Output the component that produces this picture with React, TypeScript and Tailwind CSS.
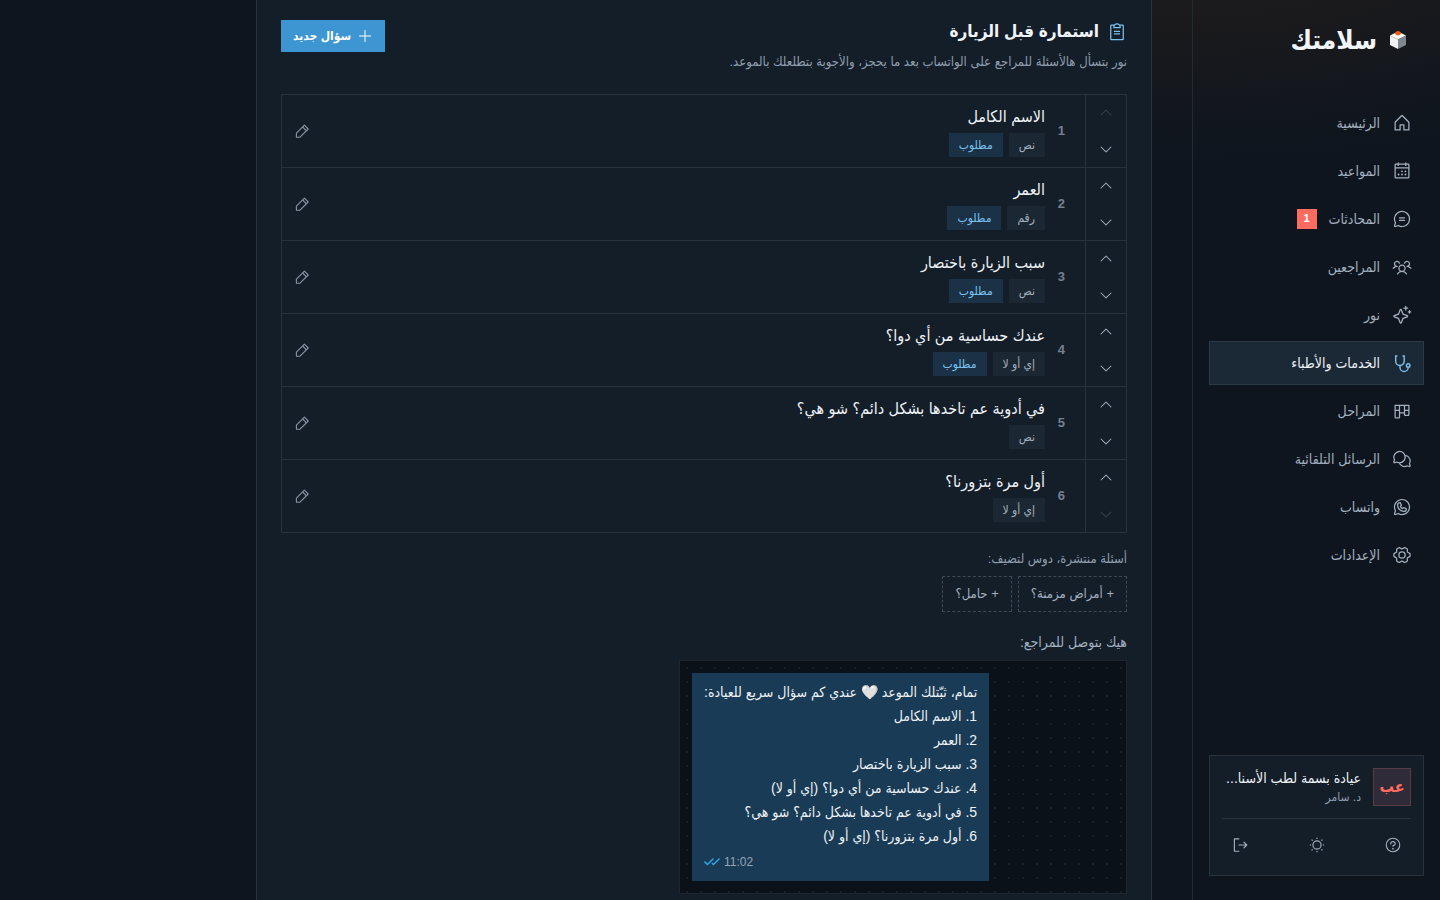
import type { ComponentType, ReactNode } from "react";
import {
  PiCalendarDots,
  PiCaretDown,
  PiCaretUp,
  PiChatCircleText,
  PiChatsCircle,
  PiChecksBold,
  PiClipboardText,
  PiGearSix,
  PiHouse,
  PiKanban,
  PiPlus,
  PiQuestion,
  PiSignOut,
  PiSparkle,
  PiUsersThree,
  PiWhatsappLogo,
} from "react-icons/pi";

type IconProps = { className?: string };

type NavItem = {
  label: string;
  icon: ComponentType<IconProps>;
  badge?: number;
  active?: boolean;
};

function StethoscopeIcon({ className }: IconProps) {
  return (
    <svg viewBox="0 0 20 20" className={className} fill="none" stroke="currentColor" strokeWidth="1.400" aria-hidden="true">
      <path d="M5.400 3H3.700v5.200a4.250 4.250 0 0 0 8.500 0V3h-1.700" />
      <path d="M8 12.400v2a4.100 4.100 0 0 0 8.200 0v-.2" />
      <circle cx="16.200" cy="12.500" r="1.800" />
    </svg>
  );
}

function SunIcon({ className }: IconProps) {
  return (
    <svg viewBox="0 0 18 18" className={className} fill="none" stroke="currentColor" strokeWidth="1.150" aria-hidden="true">
      <circle cx="9" cy="9" r="4.100" />
      <path d="M9 1.800v1.300M9 14.900v1.300M1.800 9h1.300M14.900 9h1.300M3.600 3.600l1 1M13.400 13.400l1 1M3.600 14.400l1-1M13.400 4.600l1-1" />
    </svg>
  );
}

function PencilIcon({ className }: IconProps) {
  return (
    <svg viewBox="0 0 16 16" className={className} fill="none" stroke="currentColor" strokeWidth="1.100" aria-hidden="true">
      <path d="M2.400 14.200v-4L10.400 2.200 14.200 6l-8.200 8.200z" strokeLinejoin="round" />
      <path d="M8.600 4l3.800 3.800" />
    </svg>
  );
}

const navItems: NavItem[] = [
  { label: "الرئيسية", icon: PiHouse },
  { label: "المواعيد", icon: PiCalendarDots },
  { label: "المحادثات", icon: PiChatCircleText, badge: 1 },
  { label: "المراجعين", icon: PiUsersThree },
  { label: "نور", icon: PiSparkle },
  { label: "الخدمات والأطباء", icon: StethoscopeIcon, active: true },
  { label: "المراحل", icon: PiKanban },
  { label: "الرسائل التلقائية", icon: PiChatsCircle },
  { label: "واتساب", icon: PiWhatsappLogo },
  { label: "الإعدادات", icon: PiGearSix },
];

type Question = { title: string; type: string; required?: boolean };

const questions: Question[] = [
  { title: "الاسم الكامل", type: "نص", required: true },
  { title: "العمر", type: "رقم", required: true },
  { title: "سبب الزيارة باختصار", type: "نص", required: true },
  { title: "عندك حساسية من أي دوا؟", type: "إي أو لا", required: true },
  { title: "في أدوية عم تاخدها بشكل دائم؟ شو هي؟", type: "نص" },
  { title: "أول مرة بتزورنا؟", type: "إي أو لا" },
];

const suggestions = ["أمراض مزمنة؟", "حامل؟"];

const yesNo = "إي أو لا";

function Logo() {
  return (
    <svg viewBox="0 0 18 20" className="h-5 w-[18px]" aria-hidden="true">
      <path d="M1 5.500 9 1.500l8 4-8 4z" fill="#fbfaf8" />
      <path d="M1 5.500l8 4V19l-8-4z" fill="#f4f2f0" />
      <path d="M17 5.500l-8 4V19l8-4z" fill="#7f868e" />
      <path d="M6 3.500 7.500 1.200h3L12 3.500l-1.500 1.800h-3z" fill="#f9560f" />
      <path d="M1 5.500l8 4" fill="none" stroke="#c9cbcd" strokeWidth=".6" />
    </svg>
  );
}

function NavLink({ label, icon: Icon, badge, active }: NavItem) {
  return (
    <a
      href="#"
      aria-current={active ? "page" : undefined}
      className={
        active
          ? "flex h-11 items-center gap-3 border border-[#2b3a47] bg-[#1b2835] px-[11px] text-sm text-[#eef2f6]"
          : "flex h-11 items-center gap-3 border border-transparent px-[11px] text-sm text-[#a3b0bf]"
      }
    >
      <Icon className={active ? "size-5 text-[#7cc0ee]" : "size-5"} />
      <span>{label}</span>
      {badge !== undefined && (
        <span className="flex size-5 items-center justify-center bg-[#ff6b5e] text-[11px] font-bold text-white">
          {badge}
        </span>
      )}
    </a>
  );
}

function ToolButton({ label, children }: { label: string; children: ReactNode }) {
  return (
    <button type="button" aria-label={label} className="flex size-9 items-center justify-center">
      {children}
    </button>
  );
}

function Sidebar() {
  return (
    <aside className="flex w-62 shrink-0 flex-col border-e border-[#222a34] px-4 pt-4 pb-6">
      <div className="flex h-12 items-center gap-3 px-[17px]">
        <Logo />
        <span className="text-[26px] leading-8 font-bold text-[#f1f4f8]">سلامتك</span>
      </div>
      <nav className="mt-[37px] flex flex-col gap-1">
        {navItems.map((item) => (
          <NavLink key={item.label} {...item} />
        ))}
      </nav>
      <div className="mt-auto border border-[#27323d] bg-[#141e29] p-3">
        <div className="flex items-center gap-3 pb-3">
          <div className="flex size-[38px] shrink-0 items-center justify-center border border-[#5a3a47] bg-[#302b38] font-bold text-[#ff6b5e]">
            عب
          </div>
          <div className="min-w-0 flex-1">
            <div className="text-sm leading-5 font-medium whitespace-nowrap text-[#eef2f6]">
              عيادة بسمة لطب الأسنا...
            </div>
            <div className="text-xs leading-[18px] text-[#8f9dac]">د. سامر</div>
          </div>
        </div>
        <div className="flex justify-between border-t border-[#27323d] pt-2 text-[#a3b0bf]">
          <ToolButton label="مساعدة">
            <PiQuestion className="size-[18px]" />
          </ToolButton>
          <ToolButton label="المظهر">
            <SunIcon className="size-[18px]" />
          </ToolButton>
          <ToolButton label="تسجيل الخروج">
            <PiSignOut className="size-[18px]" />
          </ToolButton>
        </div>
      </div>
    </aside>
  );
}

function QuestionRow({ question, index }: { question: Question; index: number }) {
  return (
    <li className="flex">
      <div className="flex w-[41px] flex-col border-e border-[#27323d] text-[#a3b0bf]">
        <button
          type="button"
          aria-label="لفوق"
          disabled={index === 0}
          className="flex flex-1 items-center justify-center disabled:opacity-25"
        >
          <PiCaretUp className="size-4" />
        </button>
        <button
          type="button"
          aria-label="لتحت"
          disabled={index === questions.length - 1}
          className="flex flex-1 items-center justify-center disabled:opacity-25"
        >
          <PiCaretDown className="size-4" />
        </button>
      </div>
      <div className="flex flex-1 items-center gap-3 py-2.5 ps-5 pe-1">
        <span className="w-2 text-[13px] font-bold text-[#738190]">{index + 1}</span>
        <div className="flex-1">
          <div className="text-base leading-6 font-medium text-[#eef2f6]">{question.title}</div>
          <div className="mt-1 flex gap-1.5 text-xs">
            <span className="flex h-6 items-center bg-[#1b2733] px-2.5 text-[#a3b0bf]">
              {question.type}
            </span>
            {question.required && (
              <span className="flex h-6 items-center bg-[#1b3246] px-2.5 text-[#7cc0ee]">مطلوب</span>
            )}
          </div>
        </div>
        <button
          type="button"
          aria-label="تعديل"
          className="flex size-8 items-center justify-center text-[#8795a4]"
        >
          <PencilIcon className="size-4" />
        </button>
      </div>
    </li>
  );
}

function MessagePreview() {
  return (
    <div className="flex max-w-md justify-end border border-[#1d252e] bg-[#0b1118] bg-[radial-gradient(#18212b_1px,transparent_1px)] bg-[size:14px_14px] p-3">
      <div className="bg-[#193b55] px-3 pt-[7px] pb-[9px] text-sm leading-6 text-[#eef2f6]">
        <p>تمام، ثبّتلك الموعد 🤍 عندي كم سؤال سريع للعيادة:</p>
        {questions.map((q, i) => (
          <p key={q.title}>
            {i + 1}. {q.title}
            {q.type === yesNo && ` (${yesNo})`}
          </p>
        ))}
        <div className="mt-1 flex items-center justify-end gap-1 text-xs leading-5 text-[#94a6b6]">
          <span>11:02</span>
          <PiChecksBold className="size-4 text-[#2fa8ea]" />
        </div>
      </div>
    </div>
  );
}

export default function App() {
  return (
    <div
      dir="rtl"
      className="flex h-screen overflow-hidden bg-[#0e151e] bg-[radial-gradient(ellipse_44%_28%_at_82%_-10%,#221c1c_0%,#1b1a1c_40%,#0e151e_100%)] font-['Liberation_Sans','DejaVu_Sans_Condensed',sans-serif]"
    >
      <Sidebar />
      <main className="min-w-0 flex-1 ps-10">
        <section className="min-h-full max-w-4xl border-x border-[#27323d] bg-[#141e29] px-6 pt-5">
          <header className="flex items-start justify-between">
            <div>
              <h2 className="flex items-center gap-2 text-[17px] leading-6 font-bold text-[#f1f4f8]">
                <PiClipboardText className="size-5 text-[#7cc0ee]" />
                استمارة قبل الزيارة
              </h2>
              <p className="mt-2 text-[13px] leading-5 text-[#8f9dac]">
                نور بتسأل هالأسئلة للمراجع على الواتساب بعد ما يحجز، والأجوبة بتطلعلك بالموعد.
              </p>
            </div>
            <button
              type="button"
              className="flex h-8 items-center gap-1.5 bg-[#3d95d1] px-3 text-xs font-bold text-white"
            >
              <PiPlus className="size-4" />
              سؤال جديد
            </button>
          </header>

          <ul className="mt-[22px] divide-y divide-[#27323d] border border-[#27323d]">
            {questions.map((q, i) => (
              <QuestionRow key={q.title} question={q} index={i} />
            ))}
          </ul>

          <p className="mt-4 text-[13px] leading-5 text-[#8f9dac]">أسئلة منتشرة، دوس لتضيف:</p>
          <div className="mt-[7px] flex gap-1.5">
            {suggestions.map((s) => (
              <button
                key={s}
                type="button"
                className="h-9 border border-dashed border-[#3d4955] px-3 text-[13px] text-[#a3b0bf]"
              >
                + {s}
              </button>
            ))}
          </div>

          <p className="mt-5 mb-2 text-sm leading-5 font-medium text-[#a3b0bf]">
            هيك بتوصل للمراجع:
          </p>
          <MessagePreview />
        </section>
      </main>
    </div>
  );
}
